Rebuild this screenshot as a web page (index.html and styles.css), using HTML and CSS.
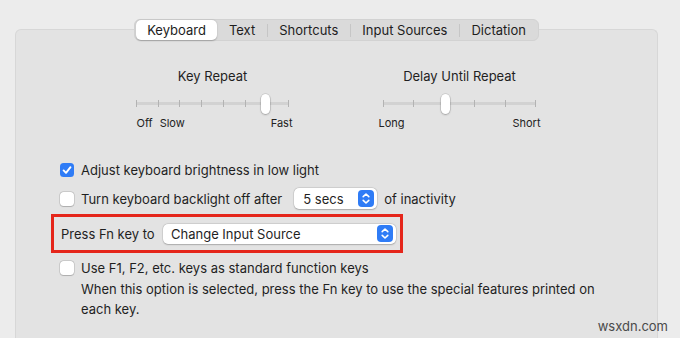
FILE: index.html
```html
<!DOCTYPE html>
<html>
<head>
<meta charset="utf-8">
<link rel="stylesheet" href="styles.css">
</head>
<body>
<div class="page">
  <div class="panel">
    <div class="tabbar-wrap">
      <div class="tabbar">
        <div class="tab selected">Keyboard</div>
        <div class="tab">Text</div>
        <div class="sep"></div>
        <div class="tab">Shortcuts</div>
        <div class="sep"></div>
        <div class="tab">Input Sources</div>
        <div class="sep"></div>
        <div class="tab">Dictation</div>
      </div>
    </div>

    <div class="sliders">
      <div class="slider-group g1">
        <div class="slider-title">Key Repeat</div>
        <div class="slider">
          <div class="track"></div>
          <div class="ticks">
            <span class="tick"></span><span class="tick"></span><span class="tick"></span><span class="tick"></span>
            <span class="tick"></span><span class="tick"></span><span class="tick"></span><span class="tick"></span>
          </div>
          <div class="thumb" style="left: 129px"></div>
        </div>
        <div class="slider-labels">
          <span class="lbl-off">Off</span><span class="lbl-slow">Slow</span><span class="grow"></span><span>Fast</span>
        </div>
      </div>
      <div class="slider-group g2">
        <div class="slider-title">Delay Until Repeat</div>
        <div class="slider">
          <div class="track"></div>
          <div class="ticks">
            <span class="tick"></span><span class="tick"></span><span class="tick"></span>
            <span class="tick"></span><span class="tick"></span><span class="tick"></span>
          </div>
          <div class="thumb" style="left: 62px"></div>
        </div>
        <div class="slider-labels">
          <span>Long</span><span class="grow"></span><span>Short</span>
        </div>
      </div>
    </div>

    <div class="options">
      <div class="row row1">
        <span class="cb checked">
          <svg width="14" height="14" viewBox="0 0 14 14"><path d="M3.6 7.4 L6 9.8 L10.5 4.2" fill="none" stroke="#fff" stroke-width="1.9" stroke-linecap="round" stroke-linejoin="round"/></svg>
        </span>
        <span class="label">Adjust keyboard brightness in low light</span>
      </div>
      <div class="row row2">
        <span class="cb"></span>
        <span class="label">Turn keyboard backlight off after</span>
        <div class="popup secs">
          <span class="popup-text">5 secs</span>
          <span class="stepper">
            <svg width="16" height="17" viewBox="0 0 16 17"><path d="M5.2 6.6 L8 4 L10.8 6.6 M5.2 10.4 L8 13 L10.8 10.4" fill="none" stroke="#fff" stroke-width="1.6" stroke-linecap="round" stroke-linejoin="round"/></svg>
          </span>
        </div>
        <span class="label">of inactivity</span>
      </div>
      <div class="row highlight">
        <span class="label">Press Fn key to</span>
        <div class="popup fn">
          <span class="popup-text">Change Input Source</span>
          <span class="stepper">
            <svg width="16" height="17" viewBox="0 0 16 17"><path d="M5.2 6.6 L8 4 L10.8 6.6 M5.2 10.4 L8 13 L10.8 10.4" fill="none" stroke="#fff" stroke-width="1.6" stroke-linecap="round" stroke-linejoin="round"/></svg>
          </span>
        </div>
      </div>
      <div class="row row4">
        <span class="cb"></span>
        <span class="label">Use F1, F2, etc. keys as standard function keys</span>
      </div>
      <p class="desc">When this option is selected, press the Fn key to use the special features printed on each key.</p>
    </div>
  </div>
  <div class="watermark">wsxdn.com</div>
</div>
</body>
</html>
```

FILE: styles.css
```css
* { box-sizing: border-box; }
html, body {
  margin: 0;
  padding: 0;
}
body {
  width: 680px;
  height: 338px;
  overflow: hidden;
  background: #ececec;
  font-family: Inter, "Noto Sans", "Liberation Sans", sans-serif;
  font-size: 13px;
  color: #1f1f1f;
}
.page {
  position: relative;
  height: 338px;
  overflow: hidden;
  padding-top: 29px;
}
.panel {
  margin: 0 22px 0 15px;
  height: 309px;
  background: #e3e3e3;
  border: 1px solid #d7d7d7;
  border-bottom: none;
  border-radius: 6px 6px 0 0;
}
.tabbar-wrap {
  display: flex;
  justify-content: center;
  margin-top: -11px;
}
.tabbar {
  display: flex;
  align-items: center;
  height: 22px;
  padding: 0 1px;
  background: #dadada;
  border: 1px solid #d2d2d2;
  border-radius: 6px;
}
.tab {
  height: 20px;
  line-height: 20px;
  padding: 0 11.5px;
  color: #1d1d1d;
  white-space: nowrap;
}
.tab.selected {
  background: #fff;
  border-radius: 5px;
  box-shadow: 0 0.5px 1.5px rgba(0,0,0,0.25);
}
.sep {
  width: 1px;
  height: 13px;
  background: #c6c6c6;
}
.sliders {
  display: flex;
  justify-content: center;
  gap: 86px;
  margin-top: 27px;
}
.slider-group.g1 { width: 160px; }
.slider-group.g2 { width: 162px; }
.slider-title {
  text-align: center;
  line-height: 16px;
}
.slider {
  position: relative;
  width: 153px;
  height: 20px;
  margin: 10px auto 0;
}
.track {
  position: absolute;
  left: 0;
  right: 0;
  top: 8px;
  height: 3px;
  background: #d2d2d2;
  border-radius: 2px;
}
.ticks {
  position: absolute;
  left: 0;
  right: 0;
  top: 6px;
  display: flex;
  justify-content: space-between;
}
.tick {
  width: 1px;
  height: 7px;
  background: #b3b3b3;
}
.thumb {
  position: absolute;
  top: 0;
  width: 9px;
  height: 20px;
  margin-left: -4px;
  background: #fff;
  border-radius: 5px;
  box-shadow: 0 0 0 0.5px rgba(0,0,0,0.18), 0 1px 2px rgba(0,0,0,0.22);
}
.slider-labels {
  display: flex;
  margin-top: 2px;
  font-size: 11px;
  line-height: 14px;
  color: #222;
}
.g1 .slider-labels { padding-left: 4px; }
.lbl-slow { margin-left: 7px; }
.grow { flex: 1; }

.options {
  padding-left: 44px;
  margin-top: 30px;
}
.row {
  display: flex;
  align-items: center;
}
.label { white-space: nowrap; flex: none; }
.row1 { height: 20px; }
.row2 { height: 21px; margin-top: 8px; }
.cb {
  width: 14px;
  height: 14px;
  border-radius: 3.5px;
  background: #fff;
  box-shadow: 0 0 0 0.5px rgba(0,0,0,0.2), 0 0.5px 1px rgba(0,0,0,0.15);
  margin-right: 7px;
  flex: none;
}
.cb.checked {
  background: #2f7cf6;
  box-shadow: none;
}
.cb svg { display: block; }
.popup {
  display: flex;
  align-items: center;
  flex: none;
  background: #fff;
  border-radius: 5px;
  box-shadow: 0 0 0 0.5px rgba(0,0,0,0.12), 0 0.5px 1.5px rgba(0,0,0,0.2);
}
.popup-text { flex: 1; white-space: nowrap; }
.stepper {
  width: 16px;
  height: 17px;
  border-radius: 4px;
  background: #2f7cf6;
  flex: none;
}
.stepper svg { display: block; }
.popup.secs {
  width: 83px;
  height: 21px;
  margin-left: 12px;
  margin-right: 7px;
  padding: 0 3px 0 9px;
}
.highlight {
  margin-top: 5px;
  margin-left: -9px;
  width: 352px;
  height: 39px;
  border: 3px solid #e5261b;
  padding: 0 4px 0 7px;
}
.popup.fn {
  width: 233px;
  height: 20px;
  margin-left: auto;
  padding: 0 3px 0 8px;
}
.row4 {
  height: 18px;
  margin-top: 6px;
}
.desc {
  margin: 2px 0 0 21px;
  width: 540px;
  line-height: 20px;
}
.watermark {
  position: absolute;
  right: 12px;
  bottom: 4px;
  font-size: 13px;
  color: #4a4a4a;
}
```
